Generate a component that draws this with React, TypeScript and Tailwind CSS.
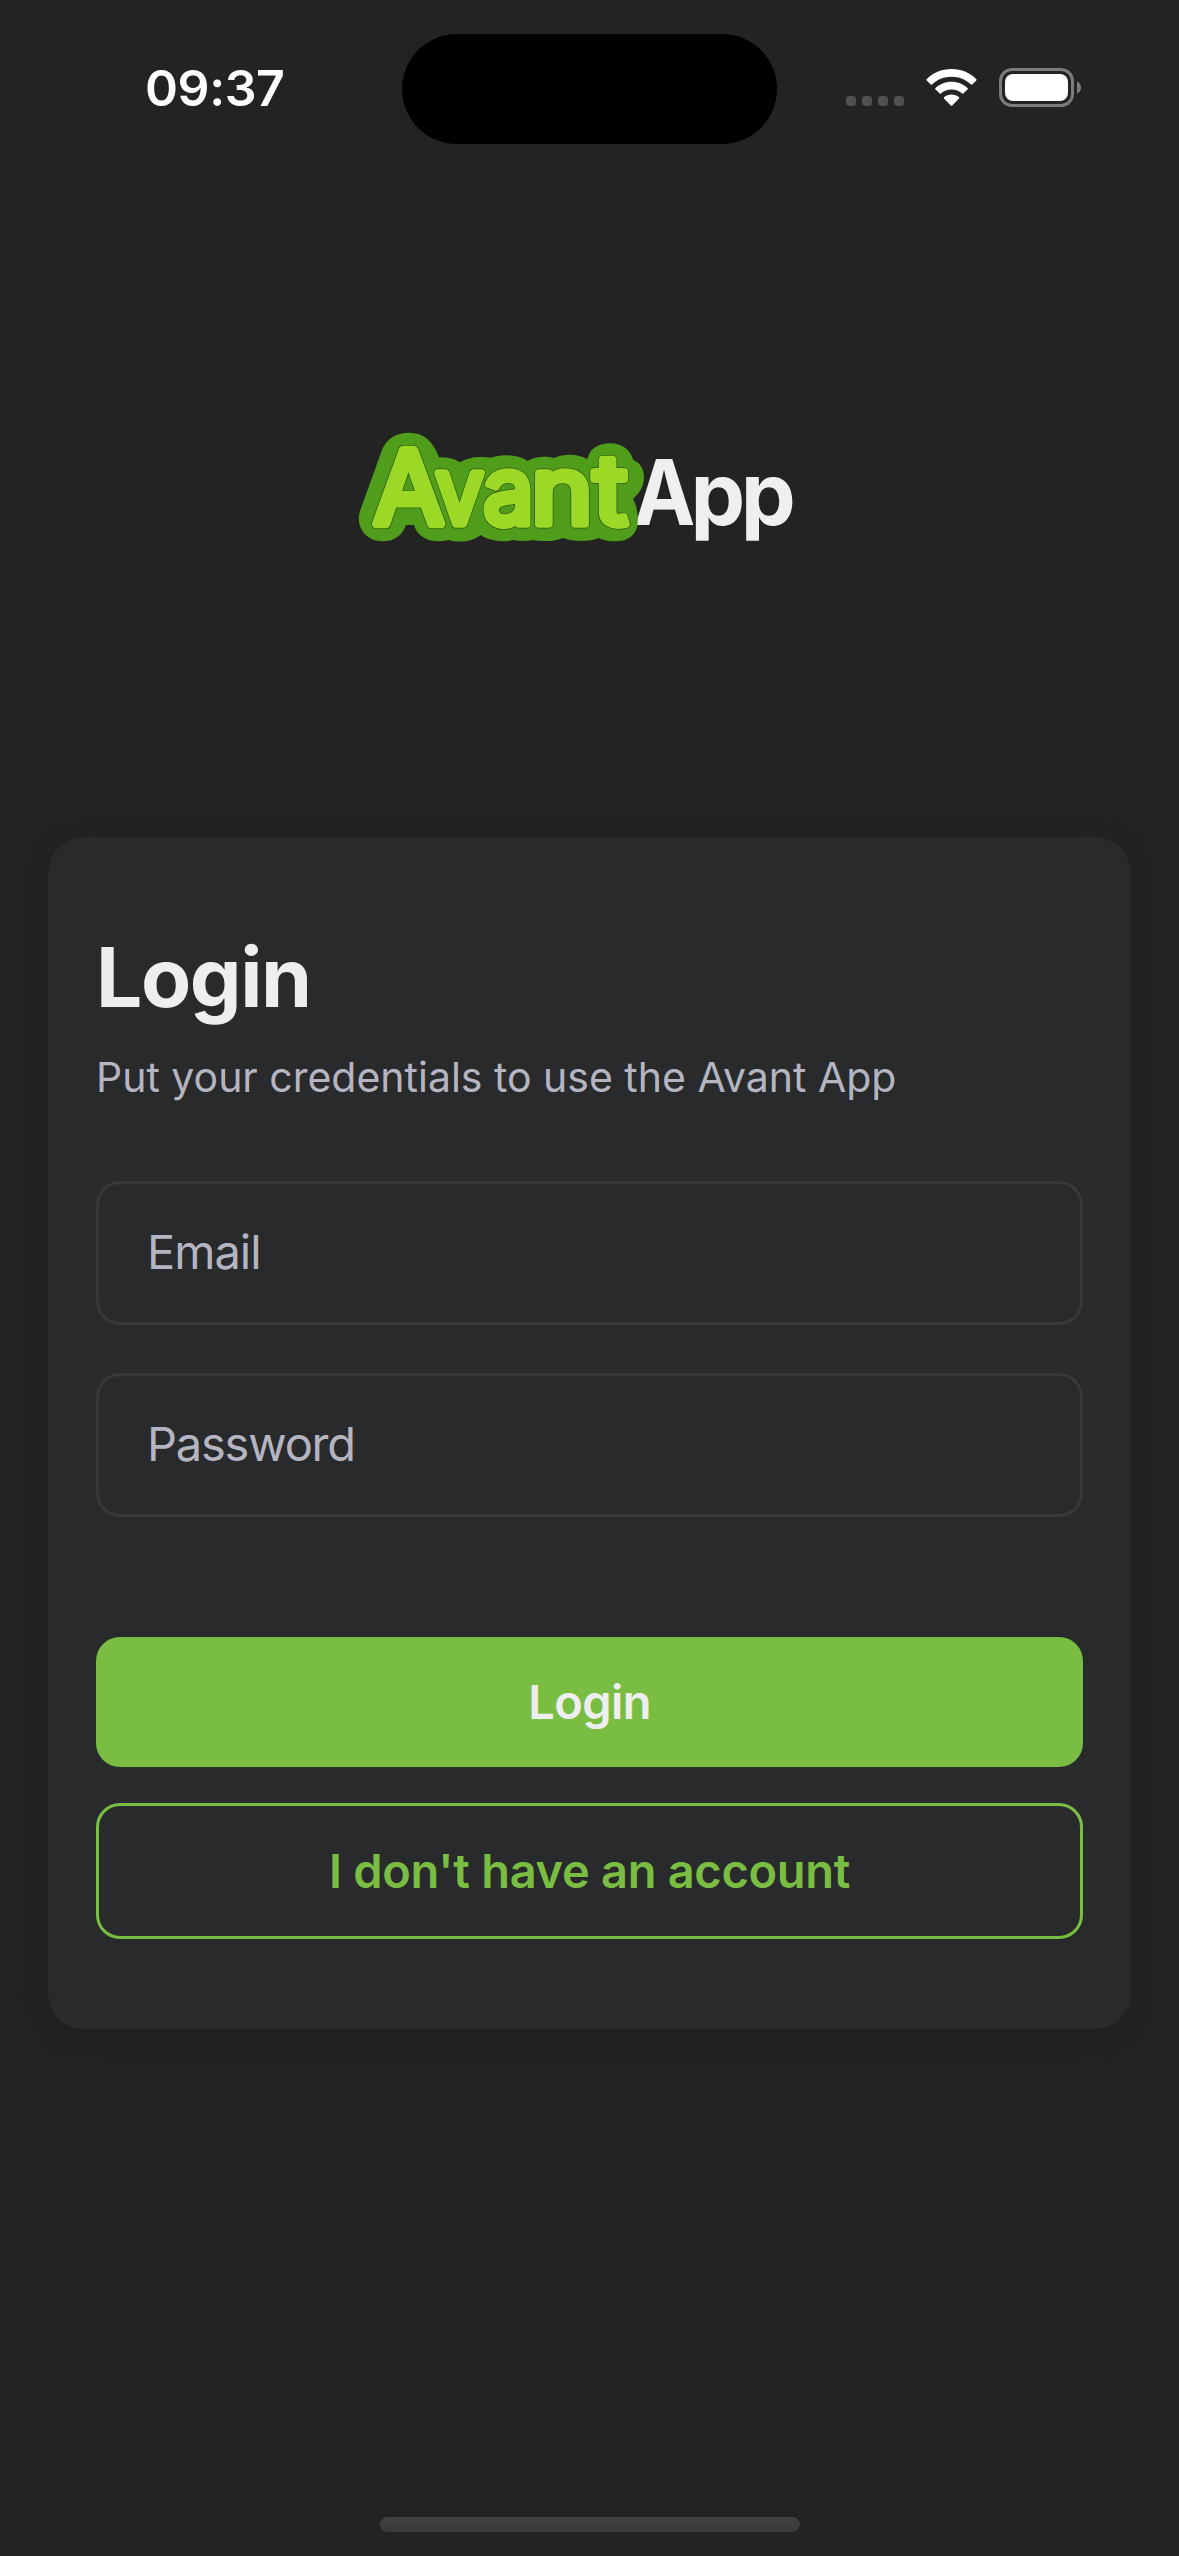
type Glyph = { ch: string; x: number; sx: number; sy: number };

const AVANT: Glyph[] = [
  { ch: "A", x: 33.5, sx: 1, sy: 1 },
  { ch: "v", x: 95.4, sx: 0.84, sy: 0.92 },
  { ch: "a", x: 143.3, sx: 0.88, sy: 0.92 },
  { ch: "n", x: 191.3, sx: 1.02, sy: 0.92 },
  { ch: "t", x: 253.4, sx: 1.02, sy: 0.925 },
];

const APP: Glyph[] = [
  { ch: "A", x: 293.5, sx: 0.92, sy: 1 },
  { ch: "p", x: 350.5, sx: 0.965, sy: 0.97 },
  { ch: "p", x: 400.8, sx: 0.97, sy: 0.97 },
];

function AvantLayer({ color, stroke }: { color: string; stroke: number }) {
  return (
    <g fontFamily="Inter" fontSize="102" fill={color} stroke={color} strokeWidth={stroke} strokeLinejoin="round">
      {AVANT.map((g) => (
        <text key={g.ch} transform={`translate(${g.x} 114) scale(${g.sx} ${g.sy})`}>{g.ch}</text>
      ))}
    </g>
  );
}

function Logo() {
  return (
    <svg width="470" height="150" viewBox="0 0 470 150" role="img" aria-label="AvantApp">
      <defs>
        <clipPath id="wordmark">
          <rect width="470" height="130.8" />
        </clipPath>
      </defs>
      <g clipPath="url(#wordmark)" fontFamily="Inter" fontWeight="700" fontSize="90" fill="#eeefee">
        {APP.map((g) => (
          <text key={g.x} transform={`translate(${g.x} 115) scale(${g.sx} ${g.sy})`}>{g.ch}</text>
        ))}
      </g>
      <path
        transform="scale(.33333)"
        fill="#509c1b"
        d="M60 303L126 120C138 87 168 68 208 68C252 68 279 93 297 142C320 142 343 145 360 157C389 138 425 139 453 143C484 132 532 132 563 153C587 138 620 138 643 144C674 130 716 131 742 148C750 115 775 100 810 100C848 100 872 121 880 150C900 158 912 176 912 202C912 232 897 250 879 267C890 287 894 309 893 338C892 373 865 394 827 394C807 394 791 391 775 384C755 395 699 396 668 384C648 394 606 396 581 390Q550 396 520 390C485 398 447 392 422 375C397 396 356 399 325 390C273 403 232 382 222 345H198C188 374 165 394 127 394C80 394 45 352 60 303Z"
      />
      <AvantLayer color="#2f5c10" stroke={10} />
      <AvantLayer color="#9bd926" stroke={8.4} />
    </svg>
  );
}

function StatusBar() {
  return (
    <header className="flex h-[177px] items-start">
      <div className="w-[402px] pt-[57px] pl-[145px] text-[50px] leading-[62px] font-semibold tracking-[-0.4px] text-white">09:37</div>
      <div className="mt-[34px] h-[110px] w-[375px] rounded-full bg-black" />
      <div className="mt-[68px] ml-[69px] flex items-start">
        <div className="mt-[28px] flex gap-[6px]">
          {[0, 1, 2, 3].map((i) => (
            <span key={i} className="size-[10px] rounded-[3.5px] bg-[#515151]" />
          ))}
        </div>
        <svg className="ml-[22px]" width="51" height="38" viewBox="0 0 51 38" fill="#fff">
          <path d="M25.5 1C35.500 1 44.500 4.800 50.400 11.300Q50.800 11.900 50.300 12.400L46.200 16.600Q45.600 17.100 45 16.600C39.700 11.500 33 8.800 25.500 8.800S11.300 11.500 6 16.600Q5.400 17.100 4.800 16.600L.7 12.400Q.2 11.900 .6 11.300C6.500 4.800 15.500 1 25.500 1Z" />
          <path d="M25.500 13.700C31.900 13.700 37.600 16.100 41.700 20.200Q42.200 20.800 41.700 21.300L37.300 25.600Q36.700 26.100 36.100 25.600C33.200 23 29.500 21.500 25.500 21.500S17.800 23 14.900 25.600Q14.300 26.100 13.700 25.600L9.300 21.300Q8.800 20.800 9.300 20.200C13.400 16.100 19.100 13.700 25.500 13.700Z" />
          <path d="M25.500 26.500C28.400 26.500 31 27.500 33 29.300Q33.500 29.800 33 30.400L26.200 37.400Q25.500 38 24.800 37.400L18 30.400Q17.500 29.800 18 29.300C20 27.500 22.600 26.500 25.500 26.500Z" />
        </svg>
        <svg className="ml-[22px]" width="83" height="40" viewBox="0 0 83 40">
          <rect x="1.500" y="1.500" width="72" height="36" rx="11.500" fill="none" stroke="#7b7b7b" strokeWidth="3" />
          <rect x="6" y="6" width="63" height="27" rx="8" fill="#fff" />
          <path d="M78 13.500V25.500C80.500 24.500 82 22.200 82 19.500S80.500 14.500 78 13.500Z" fill="#7b7b7b" />
        </svg>
      </div>
    </header>
  );
}

export default function App() {
  const field =
    "block h-[144px] w-full rounded-[24px] border-[3px] border-[#37383a] bg-transparent px-[48px] pb-[3px] text-[47px] leading-[60px] text-[#b5b5c1] outline-none placeholder:text-[#b5b5c1] placeholder:opacity-100";
  return (
    <div className="flex h-[2556px] w-[1179px] flex-col overflow-hidden bg-[#232323] font-['Inter',sans-serif]">
      <StatusBar />
      <div className="flex h-[660px] pt-[233px] pl-[340px]">
        <Logo />
      </div>
      <main className="mx-[48px] h-[1192px] rounded-[36px] bg-[#292a2c] px-[48px] pt-[91px] shadow-[0_6px_30px_rgba(0,0,0,0.12)]">
        <h1 className="text-[82px] leading-[100px] font-bold tracking-[-1.4px] text-[#eeeef0]">Login</h1>
        <p className="mt-[22px] h-[131px] text-[41px] leading-[54px] tracking-[-0.01px] whitespace-nowrap text-[#b5b5c1]">
          Put your credentials to use the Avant App
        </p>
        <form className="flex flex-col">
          <input type="email" placeholder="Email" className={`${field} tracking-[-1px]`} />
          <input type="password" placeholder="Password" className={`${field} mt-[48px] tracking-[-1.2px]`} />
          <button type="button" className="mt-[120px] h-[130px] rounded-[24px] bg-[#79bd42] text-[47px] font-semibold tracking-[-0.6px] text-[#eeeef0]">
            Login
          </button>
          <button type="button" className="mt-[36px] h-[136px] rounded-[24px] border-[3px] border-[#79bd42] text-[47px] font-semibold tracking-[-0.3px] text-[#79bd42]">
            I don't have an account
          </button>
        </form>
      </main>
      <div className="mx-auto mt-auto mb-[24px] h-[15px] w-[420px] rounded-full bg-linear-to-b from-[#414141] to-[#393939]" />
    </div>
  );
}
